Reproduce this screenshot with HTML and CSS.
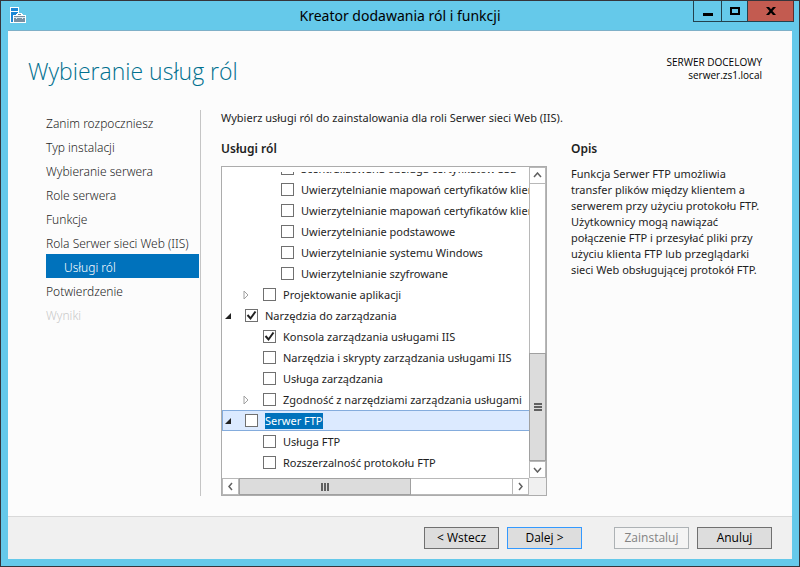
FILE: index.html
```html
<!DOCTYPE html>
<html lang="pl">
<head>
    <meta charset="UTF-8">
    <meta name="viewport" content="width=device-width, initial-scale=1.0">
    <title>Kreator dodawania ról i funkcji</title>
    <link rel="stylesheet" href="styles.css">
</head>
<body>
    <div class="window">
        <header class="titlebar">
            <svg class="app-icon" width="18" height="18" viewBox="0 0 18 18" shape-rendering="crispEdges">
                <path d="M0 0h9v16H0z" fill="#fff"/>
                <path d="M1 1h7v3H1zM1 5h7v10H1z" fill="#1b87d6"/>
                <path d="M7 6h5v1h1v1h3v8H3V8h3V7h1z" fill="#fff"/>
                <path d="M8 7h3v1H8z" fill="#6f8ca0"/>
                <path d="M4 9h11v6H4z" fill="#7890a3"/>
                <path d="M4 10h11v1H4zM6 11h1v1H6zM12 11h1v1h-1z" fill="#dfe9f0"/>
            </svg>
            <h1 class="window-title">Kreator dodawania ról i funkcji</h1>
            <div class="window-buttons">
                <button class="win-btn minimize" type="button" aria-label="Minimalizuj">
                    <svg width="12" height="10" viewBox="0 0 12 10" shape-rendering="crispEdges"><path d="M1 7h10v3H1z"/></svg>
                </button>
                <button class="win-btn maximize" type="button" aria-label="Maksymalizuj">
                    <svg width="10" height="8" viewBox="0 0 10 8" shape-rendering="crispEdges"><path d="M0 0h10v8H0zM2 2v4h6V2z" fill-rule="evenodd"/></svg>
                </button>
                <button class="win-btn close" type="button" aria-label="Zamknij">
                    <svg width="10" height="8" viewBox="0 0 10 8"><path d="M0 0h3l2 2.300L7 0h3L6.500 4 10 8H7L5 5.700 3 8H0l3.500-4z"/></svg>
                </button>
            </div>
        </header>

        <main class="client">
            <div class="page-header">
                <h2 class="page-title">Wybieranie usług ról</h2>
                <p class="target"><span>SERWER DOCELOWY</span><span>serwer.zs1.local</span></p>
            </div>

            <div class="page-body">
                <nav class="steps">
                    <a href="#">Zanim rozpoczniesz</a>
                    <a href="#">Typ instalacji</a>
                    <a href="#">Wybieranie serwera</a>
                    <a href="#">Role serwera</a>
                    <a href="#">Funkcje</a>
                    <a href="#">Rola Serwer sieci Web (IIS)</a>
                    <a href="#" class="current">Usługi ról</a>
                    <a href="#">Potwierdzenie</a>
                    <a href="#" class="disabled">Wyniki</a>
                </nav>

                <section class="content">
                    <p class="intro">Wybierz usługi ról do zainstalowania dla roli Serwer sieci Web (IIS).</p>

                    <div class="role-services">
                        <h3>Usługi ról</h3>
                        <div class="tree-box">
                            <ul class="tree">
                                <li class="node level-3"><span class="expander"></span><input type="checkbox" id="r1"><label for="r1">Scentralizowana obsługa certyfikatów SSL</label></li>
                                <li class="node level-3"><span class="expander"></span><input type="checkbox" id="r2"><label for="r2">Uwierzytelnianie mapowań certyfikatów klienta</label></li>
                                <li class="node level-3"><span class="expander"></span><input type="checkbox" id="r3"><label for="r3">Uwierzytelnianie mapowań certyfikatów klienta</label></li>
                                <li class="node level-3"><span class="expander"></span><input type="checkbox" id="r4"><label for="r4">Uwierzytelnianie podstawowe</label></li>
                                <li class="node level-3"><span class="expander"></span><input type="checkbox" id="r5"><label for="r5">Uwierzytelnianie systemu Windows</label></li>
                                <li class="node level-3"><span class="expander"></span><input type="checkbox" id="r6"><label for="r6">Uwierzytelnianie szyfrowane</label></li>
                                <li class="node level-2"><span class="expander"><svg width="6" height="10" viewBox="0 0 6 10"><path class="arrow-closed" d="M1 1v8l4-4z"/></svg></span><input type="checkbox" id="r7"><label for="r7">Projektowanie aplikacji</label></li>
                                <li class="node level-1"><span class="expander"><svg width="6" height="6" viewBox="0 0 6 6"><path class="arrow-open" d="M6 0v6H0z"/></svg></span><input type="checkbox" id="r8" checked><label for="r8">Narzędzia do zarządzania</label></li>
                                <li class="node level-2"><span class="expander"></span><input type="checkbox" id="r9" checked><label for="r9">Konsola zarządzania usługami IIS</label></li>
                                <li class="node level-2"><span class="expander"></span><input type="checkbox" id="r10"><label for="r10">Narzędzia i skrypty zarządzania usługami IIS</label></li>
                                <li class="node level-2"><span class="expander"></span><input type="checkbox" id="r11"><label for="r11">Usługa zarządzania</label></li>
                                <li class="node level-2"><span class="expander"><svg width="6" height="10" viewBox="0 0 6 10"><path class="arrow-closed" d="M1 1v8l4-4z"/></svg></span><input type="checkbox" id="r12"><label for="r12">Zgodność z narzędziami zarządzania usługami</label></li>
                                <li class="node level-1 selected"><span class="expander"><svg width="6" height="6" viewBox="0 0 6 6"><path class="arrow-open" d="M6 0v6H0z"/></svg></span><input type="checkbox" id="r13"><label for="r13">Serwer FTP</label></li>
                                <li class="node level-2"><span class="expander"></span><input type="checkbox" id="r14"><label for="r14">Usługa FTP</label></li>
                                <li class="node level-2"><span class="expander"></span><input type="checkbox" id="r15"><label for="r15">Rozszerzalność protokołu FTP</label></li>
                            </ul>

                            <div class="scrollbar vertical">
                                <button type="button" aria-label="W górę"><svg width="9" height="7" viewBox="0 0 9 7"><path d="M1 5l3.500-4L8 5"/></svg></button>
                                <div class="track">
                                    <div class="thumb"><svg width="8" height="8" viewBox="0 0 8 8" shape-rendering="crispEdges"><path d="M0 1h8M0 4h8M0 7h8"/></svg></div>
                                </div>
                                <button type="button" aria-label="W dół"><svg width="9" height="7" viewBox="0 0 9 7"><path d="M1 2l3.500 4L8 2"/></svg></button>
                            </div>

                            <div class="scrollbar horizontal">
                                <button type="button" aria-label="W lewo"><svg width="7" height="9" viewBox="0 0 7 9"><path d="M5 1L2 4.500 5 8"/></svg></button>
                                <div class="track">
                                    <div class="thumb"><svg width="8" height="8" viewBox="0 0 8 8" shape-rendering="crispEdges"><path d="M1 0v8M4 0v8M7 0v8"/></svg></div>
                                </div>
                                <button type="button" aria-label="W prawo"><svg width="7" height="9" viewBox="0 0 7 9"><path d="M2 1l3 3.500L2 8"/></svg></button>
                            </div>
                        </div>
                    </div>

                    <div class="description">
                        <h3>Opis</h3>
                        <p>Funkcja Serwer FTP umożliwia transfer plików między klientem a serwerem przy użyciu protokołu FTP. Użytkownicy mogą nawiązać połączenie FTP i przesyłać pliki przy użyciu klienta FTP lub przeglądarki sieci Web obsługującej protokół FTP.</p>
                    </div>
                </section>
            </div>

            <footer class="actions">
                <button type="button">&lt; Wstecz</button>
                <button type="button" class="default">Dalej &gt;</button>
                <button type="button" class="install" disabled>Zainstaluj</button>
                <button type="button">Anuluj</button>
            </footer>
        </main>
    </div>
</body>
</html>
```
FILE: styles.css
```css
:root {
    --frame: #65c9ea;
    --frame-edge: #35353b;
    --accent: #0072bc;
    --text: #1e1e1e;
    --line: #acacac;
}

* {
    box-sizing: border-box;
}

body {
    margin: 0;
    font-family: "Noto Sans", "Open Sans", sans-serif;
    font-size: 11px;
    line-height: 16px;
    color: var(--text);
}

h1, h2, h3, p, ul {
    margin: 0;
    padding: 0;
    font-weight: 400;
}

button {
    font: inherit;
    color: inherit;
    padding: 0;
}

.window {
    display: flex;
    flex-direction: column;
    min-height: 100vh;
    padding: 0 7px 7px;
    border: 1px solid var(--frame-edge);
    background: var(--frame);
}

/* title bar */
.titlebar {
    display: grid;
    grid-template-columns: 1fr auto 1fr;
    height: 30px;
    border-bottom: 1px solid #7fb0c8;
}

.app-icon {
    margin: 6px 0 0 2px;
}

.window-title {
    font-size: 14px;
    line-height: 29px;
    color: #000;
}

.window-buttons {
    display: flex;
    justify-self: end;
    height: 21px;
    margin-right: -2px;
}

.win-btn {
    display: flex;
    align-items: center;
    justify-content: center;
    width: 26px;
    border: 1px solid #23414d;
    border-top: 0;
    border-right: 0;
    background: var(--frame);
}

.win-btn.minimize {
    width: 28px;
}

.win-btn.close {
    width: 47px;
    border-right: 1px solid #5c2f2f;
    background: #c35b50;
}

/* page */
.client {
    display: flex;
    flex-direction: column;
    flex: 1;
    background: #fcfcfc;
}

.page-header {
    display: flex;
    justify-content: space-between;
    align-items: flex-start;
    height: 79px;
    padding: 24px 30px 0 20px;
}

.page-title {
    font-family: "Open Sans", sans-serif;
    font-size: 23px;
    font-weight: 300;
    line-height: 32px;
    color: #00708f;
}

.target {
    display: flex;
    flex-direction: column;
    padding-top: 1px;
    font-family: "Open Sans", sans-serif;
    font-size: 10px;
    line-height: 13px;
    text-align: right;
    color: #000;
}

.page-body {
    display: flex;
    flex: 1;
    padding: 0 20px 20px 38px;
}

.steps {
    display: flex;
    flex-direction: column;
    width: 155px;
    padding-right: 1px;
    border-right: 1px solid #c5c5c5;
    font-size: 12px;
    font-weight: 300;
}

.steps a {
    height: 24px;
    line-height: 27px;
    white-space: nowrap;
    color: var(--text);
    text-decoration: none;
}

.steps .current {
    padding-left: 18px;
    background: var(--accent);
    color: #fff;
}

.steps .disabled {
    color: #c8c8c8;
}

.content {
    display: grid;
    grid-template-columns: 1fr 201px;
    grid-template-rows: auto 1fr;
    column-gap: 24px;
    flex: 1;
    min-width: 0;
    padding-left: 20px;
}

.intro {
    grid-column: 1 / -1;
}

h3 {
    margin: 15px 0 9px;
    font-size: 12px;
    font-weight: 600;
}

.role-services {
    display: flex;
    flex-direction: column;
    min-width: 0;
}

.description {
    padding-right: 4px;
}

/* tree */
.tree-box {
    display: grid;
    grid-template-columns: 1fr 17px;
    grid-template-rows: 311px 17px;
    flex: 1;
    border: 1px solid var(--line);
    background: #f0f0f0;
}

/* the list is scrolled to its end, so earlier rows run off the top */
.tree {
    display: flex;
    flex-direction: column;
    justify-content: flex-end;
    min-width: 0;
    padding-bottom: 5px;
    border-top: 5px solid #fff;
    background: #fff;
    list-style: none;
    overflow: hidden;
}

.node {
    display: flex;
    align-items: center;
    flex: none;
    height: 21px;
    padding-left: 2px;
    border: 1px solid transparent;
    border-right: 0;
    white-space: nowrap;
}

.level-2 {
    padding-left: 20px;
}

.level-3 {
    padding-left: 38px;
}

.node.selected {
    border-color: #84acdd;
    background: #dceaff;
}

.expander {
    display: flex;
    flex: none;
    width: 20px;
}

.arrow-open {
    fill: #222;
}

.arrow-closed {
    fill: #fff;
    stroke: #a0a0a0;
}

.node input {
    appearance: none;
    flex: none;
    width: 13px;
    height: 13px;
    margin: 0 7px 0 0;
    border: 1px solid #707070;
    background: #fff;
}

.node input:checked {
    background: #fff url("data:image/svg+xml,%3Csvg xmlns='http://www.w3.org/2000/svg' viewBox='0 0 11 11'%3E%3Cpath d='M1.500 5l3 3.500 5-7' fill='none' stroke='%23212121' stroke-width='2'/%3E%3C/svg%3E");
}

.selected label {
    background: var(--accent);
    color: #fff;
}

/* scrollbars */
.scrollbar {
    display: flex;
    background: #fff;
}

.scrollbar button {
    display: flex;
    align-items: center;
    justify-content: center;
    flex: none;
    width: 17px;
    height: 17px;
    border: 1px solid #b8b8b8;
    background: #fff;
}

.scrollbar path {
    fill: none;
    stroke: #606060;
    stroke-width: 1.5;
}

.scrollbar .thumb path {
    stroke-width: 2;
}

.track {
    display: flex;
    flex: 1;
    border: 0 solid #b8b8b8;
}

.vertical,
.vertical .track {
    flex-direction: column;
}

.vertical .track {
    border-width: 0 1px;
}

.horizontal .track {
    border-width: 1px 0;
}

.thumb {
    display: flex;
    align-items: center;
    justify-content: center;
    border: 1px solid #a0a0a0;
    background: #dcdcdc;
}

.vertical .thumb {
    height: 39%;
    margin: auto -1px 0;
}

.horizontal .thumb {
    width: 63%;
    margin: -1px 0;
}

/* buttons */
.actions {
    display: flex;
    justify-content: flex-end;
    gap: 8px;
    padding: 10px 20px;
    border-top: 1px solid #d9d9d9;
    background: #f0f0f0;
}

.actions button {
    width: 75px;
    height: 22px;
    border: 1px solid #707070;
    background: #dddddd;
    font-family: "Open Sans", sans-serif;
    font-size: 12px;
    line-height: 20px;
    color: #000;
}

.actions .default {
    border-color: #3399ff;
}

.actions .install {
    margin-left: 24px;
    border-color: #adb2b5;
    background: #f4f4f4;
    color: #838383;
}
```
